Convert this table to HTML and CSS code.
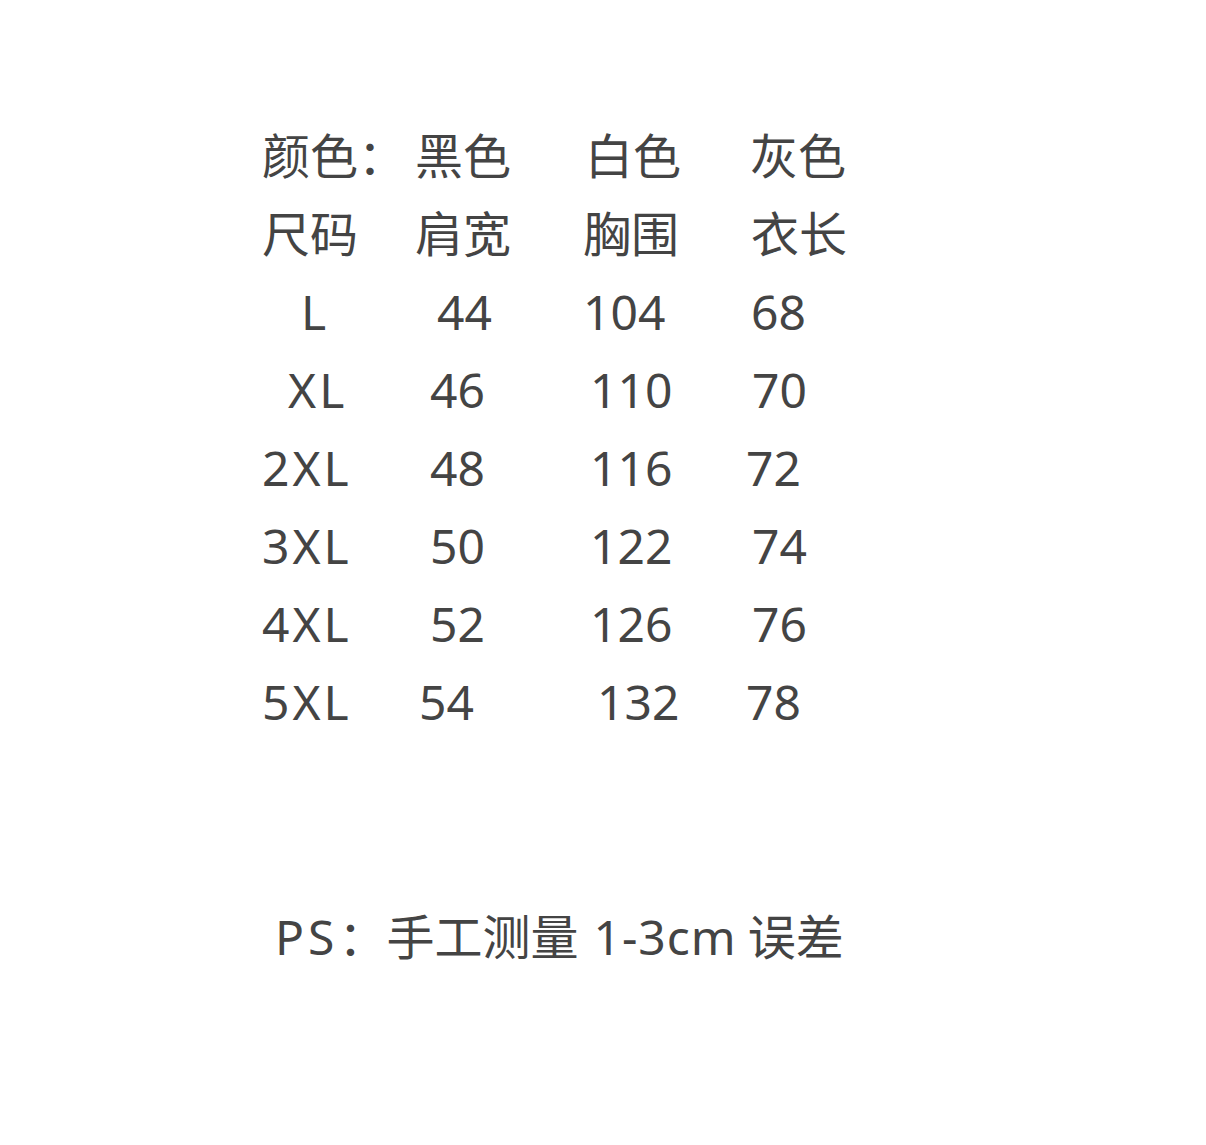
FILE: index.html
```html
<!DOCTYPE html>
<html lang="zh-CN">
<head>
<meta charset="utf-8">
<title>尺码表</title>
<link rel="stylesheet" href="styles.css">
</head>
<body>
<main class="page">
  <div class="table">
    <span>颜色：</span><span>黑色</span><span class="o2">白色</span><span class="o4">灰色</span>
    <span>尺码</span><span>肩宽</span><span>胸围</span><span class="o5">衣长</span>
    <span class="o39 sz">L</span><span class="o22">44</span><span>104</span><span class="o5">68</span>
    <span class="o26 sz">XL</span><span class="o15">46</span><span class="o7">110</span><span class="o6">70</span>
    <span class="sz">2XL</span><span class="o15">48</span><span class="o7">116</span><span>72</span>
    <span class="sz">3XL</span><span class="o15">50</span><span class="o7">122</span><span class="o6">74</span>
    <span class="sz">4XL</span><span class="o15">52</span><span class="o7">126</span><span class="o6">76</span>
    <span class="sz">5XL</span><span class="o4">54</span><span class="o14">132</span><span>78</span>
  </div>
  <p class="note"><span class="ps">PS</span>：手工测量<span class="range">1-3cm</span>误差</p>
</main>
</body>
</html>
```
FILE: styles.css
```css
html, body {
  margin: 0;
  padding: 0;
  background: #ffffff;
}

.page {
  padding: 117px 0 0 262px;
  font-family: "Noto Sans", "Noto Sans CJK SC", sans-serif;
  font-size: 48px;
  color: #444444;
}

.table {
  display: grid;
  grid-template-columns: 153px 168px 163px auto;
  grid-auto-rows: 78px;
  line-height: 78px;
}

.table span {
  white-space: nowrap;
}

.table .sz {
  letter-spacing: 3px;
}

.o2 { padding-left: 2px; }
.o4 { padding-left: 4px; }
.o5 { padding-left: 5px; }
.o6 { padding-left: 6px; }
.o7 { padding-left: 7px; }
.o14 { padding-left: 14px; }
.o15 { padding-left: 15px; }
.o22 { padding-left: 22px; }
.o26 { padding-left: 26px; }
.o39 { padding-left: 39px; }

.note {
  margin: 157px 0 0 13px;
  line-height: 78px;
  white-space: nowrap;
}

.note .ps {
  letter-spacing: 4px;
}

.note .range {
  letter-spacing: 1px;
  margin: 0 11px 0 15px;
}
```
